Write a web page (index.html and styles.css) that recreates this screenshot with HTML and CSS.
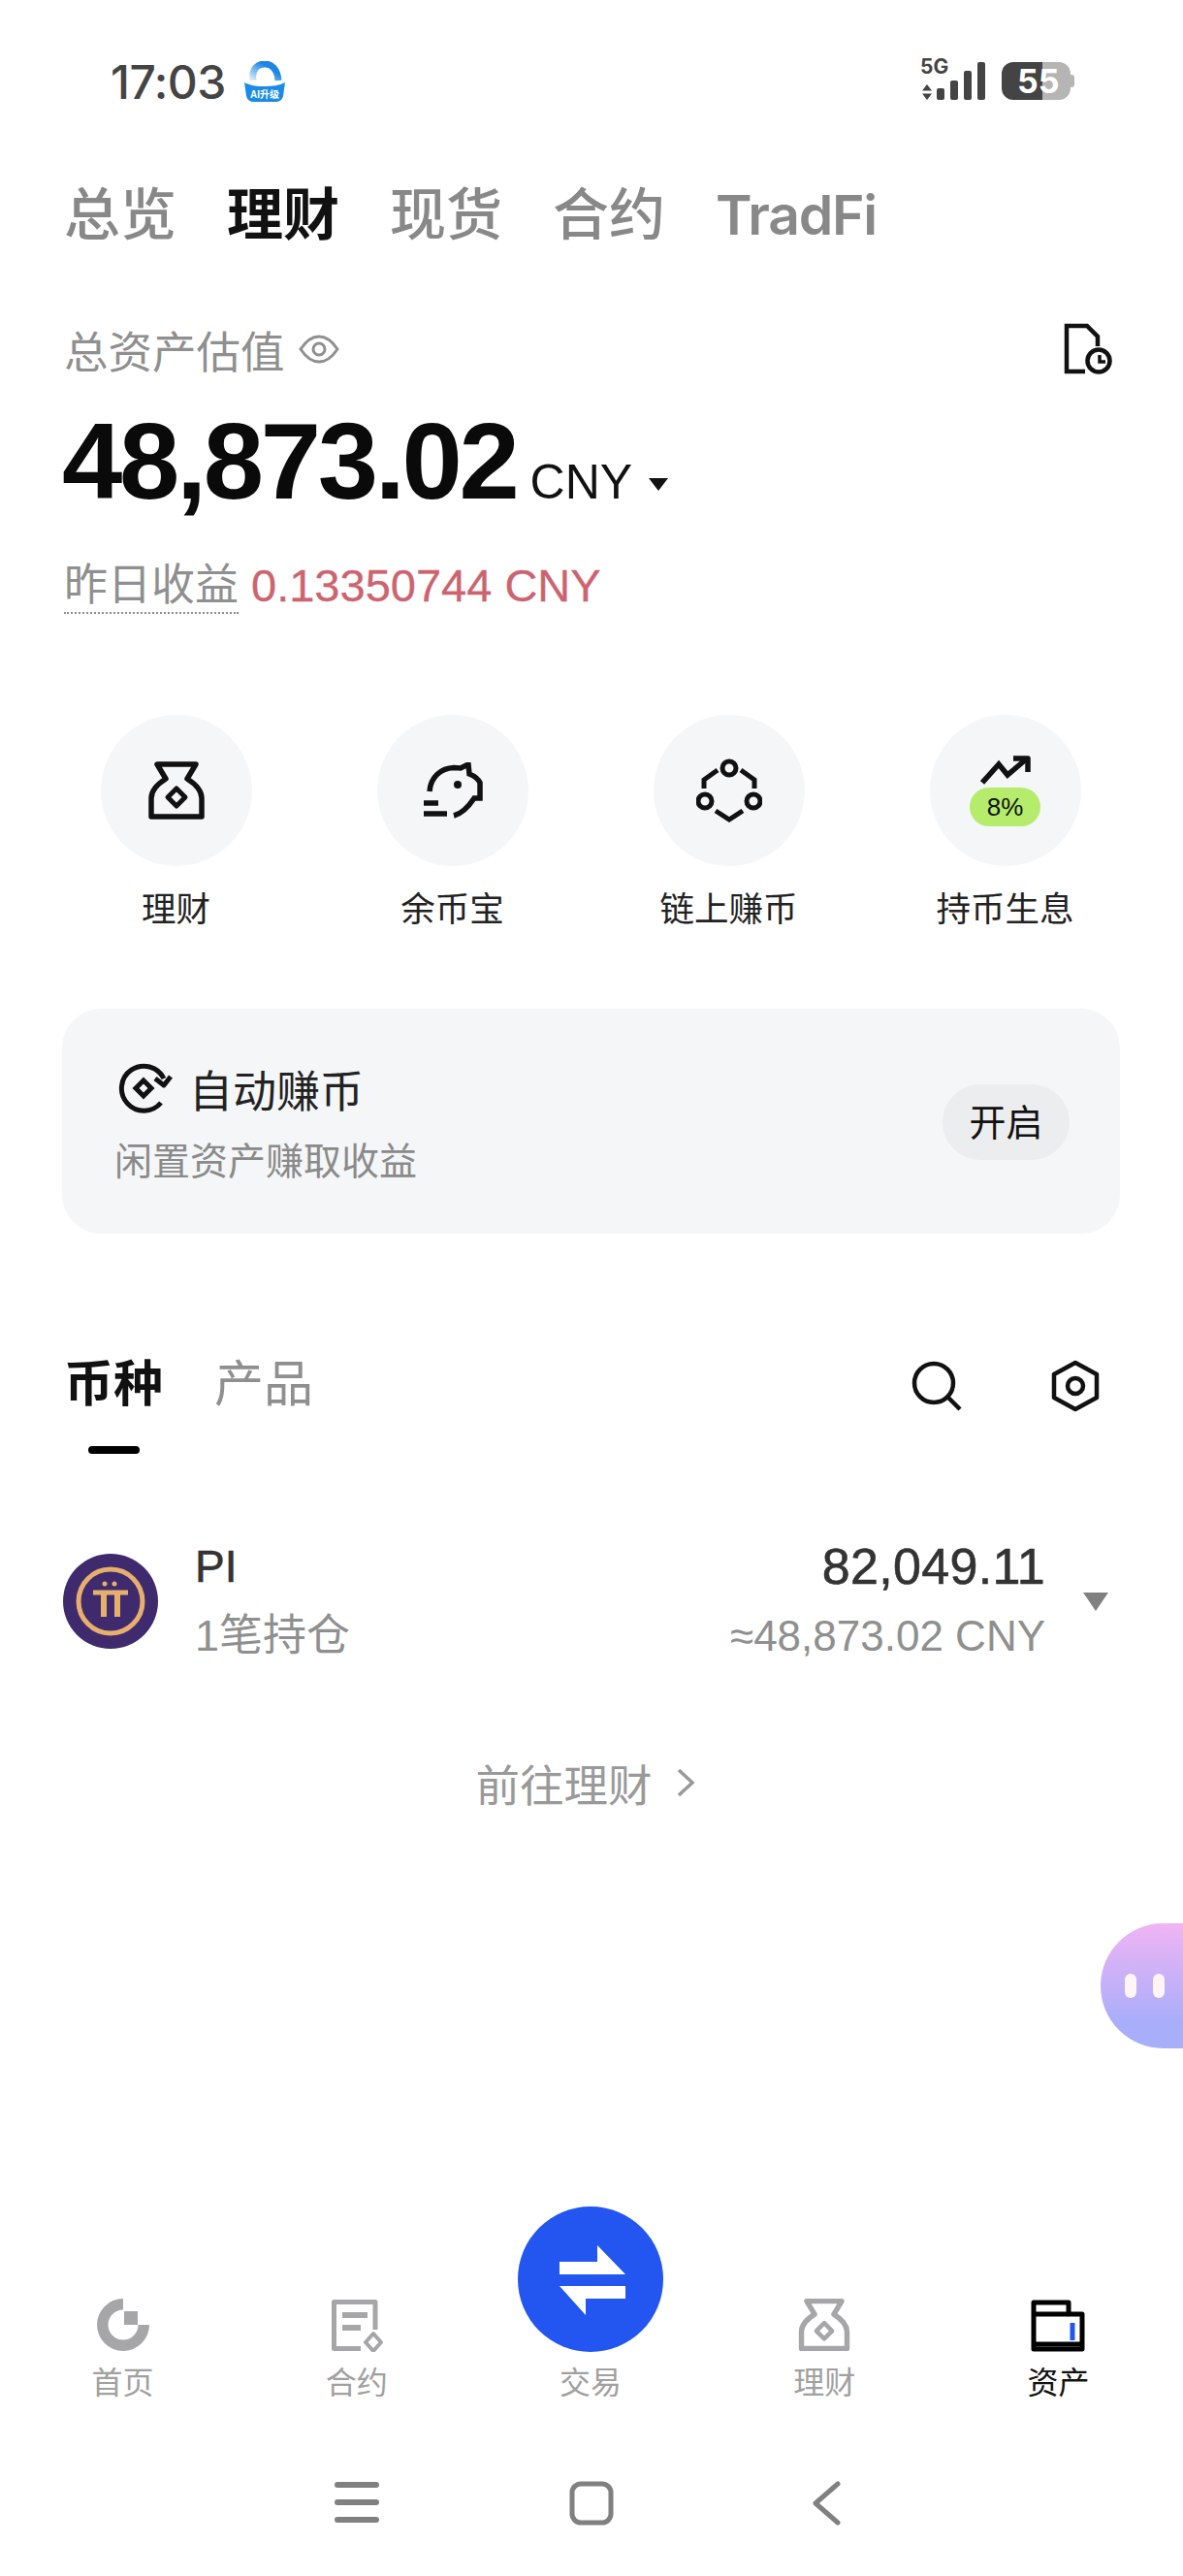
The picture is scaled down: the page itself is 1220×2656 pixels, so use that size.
FILE: index.html
```html
<!DOCTYPE html>
<html lang="zh-CN">
  <head>
    <meta charset="UTF-8" />
    <meta name="viewport" content="width=device-width, initial-scale=1.0" />
    <title>资产</title>
    <link rel="stylesheet" href="styles.css">
  </head>
  <body>
    <!-- Status bar -->
    <header class="status">
      <div class="status-left">
        <span class="clock">17:03</span>
        <svg class="app-badge" width="44" height="42" viewBox="0 0 44 42" fill="none">
          <defs>
            <linearGradient id="badgeArc" x1="1" y1="0" x2="0" y2="1">
              <stop offset="0.3" stop-color="#1c86e6"/>
              <stop offset="1" stop-color="#d8ecfb"/>
            </linearGradient>
          </defs>
          <path d="M10 20C8 8 15 3 22 3s13 5 14 17" stroke="url(#badgeArc)" stroke-width="7" fill="none"/>
          <path d="M1 22c6 3 13 4 21 4s15-1 21-4l-2 14c-1 4-4 6-8 6H11c-4 0-7-2-8-6z" fill="#1c8be8"/>
          <text x="22" y="38" text-anchor="middle" class="badge-text">AI升级</text>
        </svg>
      </div>
      <div class="status-right">
        <div class="net">
          <span class="net-5g">5G</span>
          <svg width="12" height="16" viewBox="0 0 12 16"><path d="M6 0l5 6.5H1zM6 16l-5-6.5h10z" fill="#444"/></svg>
        </div>
        <div class="bars">
          <i class="bar bar1"></i><i class="bar bar2"></i><i class="bar bar3"></i><i class="bar bar4"></i>
        </div>
        <div class="battery"><span class="battery-num">55</span></div>
      </div>
    </header>

    <nav class="tabs">
      <span class="tab">总览</span>
      <span class="tab active">理财</span>
      <span class="tab">现货</span>
      <span class="tab">合约</span>
      <span class="tab tab-latin">TradFi</span>
    </nav>

    <!-- Balance -->
    <section class="balance">
      <div class="balance-top">
        <div class="balance-label">
          <span>总资产估值</span>
          <svg width="42" height="30" viewBox="0 0 42 30" fill="none" stroke="#8f8f8f" stroke-width="3">
            <path d="M2 15C8 6 14 2 21 2s13 4 19 13c-6 9-12 13-19 13S8 24 2 15Z"/>
            <circle cx="21" cy="15" r="6"/>
          </svg>
        </div>
        <svg width="50" height="54" viewBox="0 0 50 54" fill="none" stroke="#111" stroke-width="4.5">
          <path d="M22 50H3V3h21l11 11v10"/>
          <circle cx="36" cy="39" r="11.5"/>
          <path d="M37 33v7h6" stroke-width="3.5"/>
        </svg>
      </div>
      <div class="amount-row">
        <span class="amount">48,873.02</span>
        <span class="currency">CNY</span>
        <i class="caret-down"></i>
      </div>
      <div class="yesterday">
        <span class="yesterday-label">昨日收益</span>
        <span class="yesterday-value">0.13350744 CNY</span>
      </div>
    </section>

    <!-- Shortcuts -->
    <section class="shortcuts">
      <div class="shortcut">
        <div class="shortcut-circle">
          <svg width="58" height="62" viewBox="0 0 58 62" fill="none" stroke="#111" stroke-width="5.5" stroke-linejoin="round">
            <path d="M9 4H49L40 19C48 24 55 31 55 39V58H3V39C3 31 10 24 18 19Z"/>
            <path d="M29 29l9 9-9 9-9-9z" stroke-width="5"/>
          </svg>
        </div>
        <span class="shortcut-label">理财</span>
      </div>
      <div class="shortcut">
        <div class="shortcut-circle">
          <svg width="64" height="58" viewBox="0 0 64 58" fill="none" stroke="#111" stroke-width="5.5">
            <path d="M8 30C9 15 20 6 33 5.500L40 6L48 2L49 12C54 14 58 17 60 21V37H54C48 46 41 53 33 55"/>
            <path d="M2 42H17M2 53H26"/>
            <circle cx="37" cy="23" r="4" fill="#111" stroke="none"/>
          </svg>
        </div>
        <span class="shortcut-label">余币宝</span>
      </div>
      <div class="shortcut">
        <div class="shortcut-circle">
          <svg width="68" height="66" viewBox="0 0 68 66" fill="none" stroke="#111" stroke-width="5">
            <circle cx="34" cy="10" r="7"/>
            <circle cx="9" cy="44" r="7"/>
            <circle cx="59" cy="44" r="7"/>
            <path d="M22 12L8 22v9M46 12l14 10v9M20 54l14 9 14-9"/>
          </svg>
        </div>
        <span class="shortcut-label">链上赚币</span>
      </div>
      <div class="shortcut">
        <div class="shortcut-circle trend">
          <svg width="52" height="30" viewBox="0 0 52 30" fill="none" stroke="#111" stroke-width="5.500">
            <path d="M2 28L19 9l9 11L47 4"/>
            <path d="M34 3h15v14" stroke-linejoin="round"/>
          </svg>
          <span class="rate">8%</span>
        </div>
        <span class="shortcut-label">持币生息</span>
      </div>
    </section>

    <!-- Auto earn card -->
    <section class="auto-card">
      <div class="auto-text">
        <div class="auto-title">
          <svg width="56" height="52" viewBox="0 0 56 52" fill="none" stroke="#111" stroke-width="5">
            <path d="M44 41A23 23 0 1 1 47 16"/>
            <path d="M54 14L47 23 38 16" stroke-linejoin="round"/>
            <path d="M26 18l8 8-8 8-8-8z"/>
          </svg>
          <span>自动赚币</span>
        </div>
        <div class="auto-sub">闲置资产赚取收益</div>
      </div>
      <button class="auto-btn">开启</button>
    </section>

    <!-- Holdings -->
    <section class="seg">
      <div class="seg-tabs">
        <span class="seg-tab active">币种</span>
        <span class="seg-tab">产品</span>
      </div>
      <div class="seg-tools">
        <svg width="52" height="52" viewBox="0 0 52 52" fill="none" stroke="#111" stroke-width="4.5">
          <circle cx="23" cy="23" r="20"/>
          <path d="M37 37l13 13"/>
        </svg>
        <svg width="50" height="54" viewBox="0 0 50 54" fill="none" stroke="#111" stroke-width="4.5" stroke-linejoin="round">
          <path d="M25 3l22 12v24L25 51 3 39V15z"/>
          <circle cx="25" cy="27" r="8"/>
        </svg>
      </div>
    </section>
    <div class="seg-bar"></div>

    <section class="coin-row">
      <svg class="coin-logo" width="98" height="98" viewBox="0 0 98 98" fill="none">
        <circle cx="49" cy="49" r="49" fill="#3f2a6e"/>
        <circle cx="49" cy="49" r="33" stroke="#e6b06c" stroke-width="5"/>
        <circle cx="43" cy="31" r="2.5" fill="#e6b06c"/>
        <circle cx="53" cy="31" r="2.5" fill="#e6b06c"/>
        <path d="M31 40h36" stroke="#e6b06c" stroke-width="5"/>
        <path d="M42 40v25M56 40v25" stroke="#e6b06c" stroke-width="6"/>
      </svg>
      <div class="coin-name">
        <div class="coin-symbol">PI</div>
        <div class="coin-pos">1笔持仓</div>
      </div>
      <div class="coin-amounts">
        <div class="coin-qty">82,049.11</div>
        <div class="coin-cny">≈48,873.02 CNY</div>
      </div>
      <i class="caret-row"></i>
    </section>

    <a class="goto">
      <span>前往理财</span>
      <svg width="20" height="32" viewBox="0 0 20 32" fill="none" stroke="#999" stroke-width="3.5"><path d="M3 3l14 13L3 29"/></svg>
    </a>

    <div class="spacer"></div>

    <!-- Bottom nav -->
    <footer class="bottom-nav">
      <div class="nav-item">
        <svg width="56" height="56" viewBox="0 0 56 56" fill="#a6a6a8">
          <path d="M28 1A27 27 0 1 0 55 28H43.500A15.500 15.500 0 1 1 28 12.500Z"/>
          <rect x="29" y="14" width="14" height="14"/>
        </svg>
        <span class="nav-label">首页</span>
      </div>
      <div class="nav-item">
        <svg width="56" height="56" viewBox="0 0 56 56" fill="none" stroke="#a6a6a8" stroke-width="5" stroke-linejoin="round">
          <path d="M47 33V4.500H4.500V52.500H32"/>
          <path d="M13 18H39M13 31H32" stroke-width="6"/>
          <path d="M45 37l8 9-8 9-8-9z" stroke-width="4"/>
        </svg>
        <span class="nav-label">合约</span>
      </div>
      <div class="nav-item">
        <svg class="swap" width="150" height="150" viewBox="0 0 150 150">
          <circle cx="75" cy="75" r="75" fill="#2355f0"/>
          <path d="M43 57h39V40l29 30H43zM111 82v13H70v17L43 82z" fill="#fff"/>
        </svg>
        <span class="nav-label">交易</span>
      </div>
      <div class="nav-item">
        <svg width="54" height="56" viewBox="0 0 58 62" fill="none" stroke="#a6a6a8" stroke-width="6" stroke-linejoin="round">
          <path d="M9 4H49L40 19C48 24 55 31 55 39V58H3V39C3 31 10 24 18 19Z"/>
          <path d="M29 29l9 9-9 9-9-9z" stroke-width="5"/>
        </svg>
        <span class="nav-label">理财</span>
      </div>
      <div class="nav-item active">
        <svg width="56" height="54" viewBox="0 0 56 54" fill="none">
          <path d="M3 3h36v12h14v36H3z" stroke="#000" stroke-width="5" stroke-linejoin="round"/>
          <path d="M3 15h36M3 46h50" stroke="#000" stroke-width="5"/>
          <path d="M43 24v18" stroke="#2355f0" stroke-width="5"/>
        </svg>
        <span class="nav-label">资产</span>
      </div>
    </footer>

    <!-- System navigation -->
    <div class="sys-nav">
      <svg width="46" height="44" viewBox="0 0 46 44" fill="none" stroke="#808080" stroke-width="6" stroke-linecap="round"><path d="M3 4h40M3 22h40M3 40h40"/></svg>
      <svg width="46" height="46" viewBox="0 0 46 46" fill="none" stroke="#808080" stroke-width="5"><rect x="3" y="3" width="40" height="40" rx="9"/></svg>
      <svg width="30" height="46" viewBox="0 0 30 46" fill="none" stroke="#808080" stroke-width="5" stroke-linecap="round" stroke-linejoin="round"><path d="M27 3L4 23l23 20"/></svg>
    </div>

    <!-- Floating assistant -->
    <div class="fab"><i class="fab-eye"></i><i class="fab-eye"></i></div>
  </body>
</html>
```

FILE: styles.css
```css
* { box-sizing: border-box; }
body {
  margin: 0;
  width: 1220px;
  height: 2656px;
  position: relative;
  overflow: hidden;
  display: flex;
  flex-direction: column;
  background: #fff;
  color: #111;
  font-family: "Liberation Sans", "Noto Sans CJK SC", sans-serif;
}

/* status bar */
.status {
  height: 168px;
  padding: 0 112px 0 114px;
  display: flex;
  align-items: center;
  justify-content: space-between;
}
.status-left { display: flex; align-items: center; gap: 18px; }
.clock { font-family: Inter, sans-serif; font-size: 48px; font-weight: 500; color: #444; letter-spacing: -0.5px; }
.badge-text { font-size: 10px; fill: #fff; font-weight: 700; }
.status-right { display: flex; align-items: flex-end; height: 44px; margin-bottom: 6px; }
.net { display: flex; flex-direction: column; align-items: flex-start; gap: 8px; width: 32px; padding-left: 1px; }
.net-5g { font-family: Inter, sans-serif; font-size: 21px; line-height: 20px; font-weight: 700; color: #444; margin-left: -1px; }
.bars { display: flex; align-items: flex-end; gap: 6px; margin-left: -15px; }
.bar { display: block; width: 8px; background: #444; border-radius: 2px; }
.bar1 { height: 12px; }
.bar2 { height: 20px; }
.bar3 { height: 30px; }
.bar4 { height: 39px; }
.battery {
  position: relative;
  width: 71px;
  height: 39px;
  margin: 0 4px 0 17px;
  border-radius: 12px;
  background: linear-gradient(90deg, #444 0 42px, #b5b5b5 42px);
  color: #fff;
  font-family: Inter, sans-serif;
  font-size: 34px;
  font-weight: 700;
  line-height: 39px;
  padding-left: 16px;
}
.battery::after {
  content: "";
  position: absolute;
  right: -4px;
  top: 13px;
  width: 4px;
  height: 13px;
  border-radius: 0 3px 3px 0;
  background: #b5b5b5;
}

/* top tabs */
.tabs { display: flex; gap: 52px; padding: 16px 0 0 66px; line-height: 76px; }
.tab { font-size: 58px; font-weight: 500; color: #888; }
.tab.active { color: #111; font-weight: 700; }
.tab-latin { font-family: Inter, sans-serif; font-weight: 600; letter-spacing: -1.2px; font-size: 57px; }

/* balance */
.balance { padding: 70px 73px 0 66px; }
.balance-top { display: flex; justify-content: space-between; align-items: center; height: 60px; }
.balance-label { display: flex; align-items: center; gap: 14px; font-size: 45.5px; color: #8f8f8f; }
.amount-row { display: flex; align-items: baseline; margin-top: 31px; height: 110px; line-height: 110px; }
.amount { font-size: 112px; font-weight: 700; letter-spacing: -3.3px; color: #0a0a0a; margin-left: -2px; }
.currency { font-size: 50px; margin-left: 14px; color: #111; }
.caret-down {
  width: 0;
  height: 0;
  margin-left: 17px;
  border-left: 10px solid transparent;
  border-right: 10px solid transparent;
  border-top: 13px solid #111;
  align-self: center;
  margin-top: 46px;
}
.yesterday { display: flex; align-items: center; gap: 13px; margin-top: 42px; height: 60px; font-size: 45px; }
.yesterday-label { color: #8f8f8f; border-bottom: 2px dotted #8f8f8f; padding-top: 3px; line-height: 55px; }
.yesterday-value { color: #cc6470; font-size: 47px; -webkit-text-stroke: 0.3px #cc6470; }

/* shortcuts */
.shortcuts { display: grid; grid-template-columns: repeat(4, 1fr); padding: 104px 41px 0 39px; }
.shortcut { display: flex; flex-direction: column; align-items: center; gap: 20px; }
.shortcut-circle {
  width: 156px;
  height: 156px;
  border-radius: 50%;
  background: #f5f6f8;
  display: flex;
  align-items: center;
  justify-content: center;
}
.shortcut-circle.trend { flex-direction: column; gap: 3px; }
.rate {
  width: 73px;
  height: 40px;
  border-radius: 20px;
  background: #b5ec6b;
  font-size: 26px;
  line-height: 40px;
  text-align: center;
  color: #111;
}
.shortcut-label { font-size: 35.5px; line-height: 50px; color: #222; }

/* auto earn card */
.auto-card {
  margin: 77px 65px 0 64px;
  height: 232px;
  padding: 52px 52px 0 54px;
  background: #f5f6f8;
  border-radius: 40px;
  display: flex;
  justify-content: space-between;
}
.auto-title { display: flex; align-items: center; gap: 17px; height: 60px; margin-left: 4px; font-size: 45px; color: #222; }
.auto-sub { margin-top: 16px; font-size: 39px; line-height: 60px; color: #8a8a8a; }
.auto-btn {
  width: 131px;
  height: 78px;
  margin-top: 26px;
  border: none;
  border-radius: 39px;
  background: #ecedee;
  color: #111;
  font-family: inherit;
  font-size: 38px;
  padding: 0 0 5px;
}

/* holdings */
.seg { display: flex; justify-content: space-between; align-items: center; margin-top: 121px; height: 70px; padding: 0 86px 0 66px; }
.seg-tabs { display: flex; gap: 53px; font-size: 51px; line-height: 70px; height: 70px; color: #8f8f8f; }
.seg-tab.active { color: #111; font-weight: 700; }
.seg-tools { display: flex; gap: 92px; align-items: center; padding-top: 2px; }
.seg-bar { width: 53px; height: 8px; margin: 28px 0 0 91px; border-radius: 4px; background: #000; }

.coin-row { display: flex; align-items: center; margin-top: 86px; height: 132px; padding: 0 77px 0 65px; }
.coin-logo { flex: none; }
.coin-name { margin-left: 38px; flex: 1; }
.coin-symbol { font-size: 46px; line-height: 60px; color: #333; -webkit-text-stroke: 0.6px #333; }
.coin-pos { margin-top: 12px; font-size: 45px; line-height: 60px; color: #8f8f8f; }
.coin-amounts { text-align: right; }
.coin-qty { font-size: 52px; line-height: 60px; color: #333; letter-spacing: 0.3px; -webkit-text-stroke: 0.6px #333; }
.coin-cny { margin-top: 12px; font-size: 44px; line-height: 60px; color: #8f8f8f; }
.caret-row {
  width: 0;
  height: 0;
  margin-left: 39px;
  border-left: 13px solid transparent;
  border-right: 13px solid transparent;
  border-top: 19px solid #808080;
}
.goto {
  display: flex;
  justify-content: center;
  align-items: center;
  gap: 24px;
  margin-top: 91px;
  padding-right: 13px;
  height: 60px;
  font-size: 45.5px;
  color: #999;
}
.spacer { flex: 1; }

/* bottom nav */
.bottom-nav { display: grid; grid-template-columns: repeat(5, 1fr); padding: 0 8px 0 6px; align-items: end; }
.nav-item { display: flex; flex-direction: column; align-items: center; gap: 10px; }
.nav-label { font-size: 32px; line-height: 44px; color: #a0a0a0; }
.nav-item.active .nav-label { color: #111; }

/* system nav */
.sys-nav { height: 177px; padding: 79px 0 0 247px; display: grid; grid-template-columns: repeat(3, 242px); justify-items: center; align-items: start; }

/* floating assistant */
.fab {
  position: absolute;
  top: 1983px;
  right: 0;
  width: 85px;
  height: 129px;
  border-radius: 65px 0 0 65px;
  background: linear-gradient(180deg, #f0b4f4, #a8aefa 80%);
  display: flex;
  align-items: center;
  gap: 17px;
  padding-left: 25px;
}
.fab-eye { width: 12px; height: 25px; border-radius: 6px; background: #fff4f6; }
```
